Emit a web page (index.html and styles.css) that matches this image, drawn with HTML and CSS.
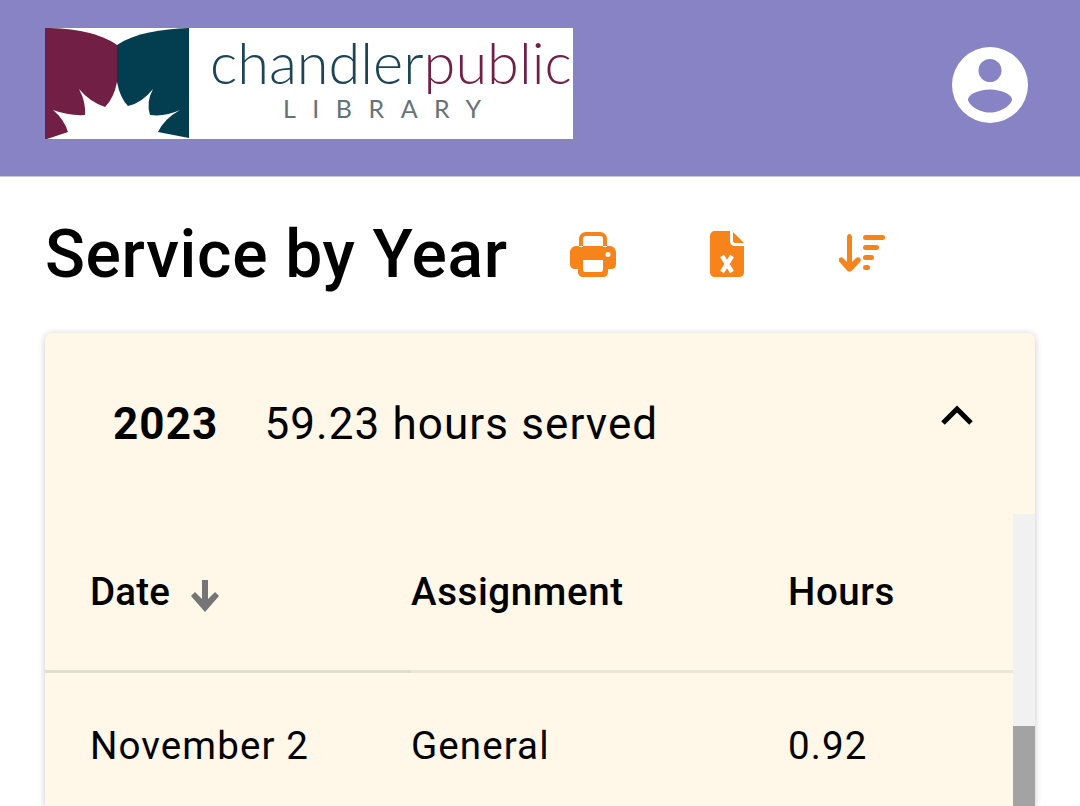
FILE: index.html
```html
<!DOCTYPE html>
<html lang="en">
<head>
    <meta charset="UTF-8">
    <meta name="viewport" content="width=device-width, initial-scale=1.0">
    <title>Service by Year</title>
    <link rel="stylesheet" href="styles.css">
</head>
<body>
    <header class="topbar">
        <div class="logo">
            <svg class="logo-mark" viewBox="0 0 145 111" width="145" height="111">
                <path fill="#711f45" d="M0 0C28 0 55 5 72 17V111H0Z"/>
                <path fill="#033e50" d="M72 17C90 5 116 1 144 0V111H72Z"/>
                <path fill="#fff" d="M2 111L23 104Q19 91 8 82Q24 88 40 87Q41 74 34 61Q45 74 60 79Q69 70 72 54Q75 70 83 78Q97 75 108 61Q101 74 105 87Q120 89 135 82Q119 91 113 104L144 110V111Z"/>
            </svg>
            <div class="logo-text">
                <div class="logo-name"><span class="logo-dark">chandler</span><span class="logo-red">public</span></div>
                <div class="logo-sub">LIBRARY</div>
            </div>
        </div>
        <svg class="account" viewBox="0 0 76 76" width="76" height="76">
            <path fill="#fff" fill-rule="evenodd" d="M38 0a38 38 0 1 0 0 76a38 38 0 1 0 0-76ZM38 12a11.500 11.500 0 1 1 0 23a11.500 11.500 0 1 1 0-23ZM38 42.500C50 42.500 60 48 60 52.500C60 57 50 65.500 38 65.500C26 65.500 16 57 16 52.500C16 48 26 42.500 38 42.500Z"/>
        </svg>
    </header>

    <main class="content">
        <div class="title-row">
            <h1>Service by Year</h1>
            <div class="actions">
                <svg viewBox="0 0 46 46" width="46" height="46" fill="#f7831b">
                    <path fill-rule="evenodd" d="M9 16V8C9 4 12 1 16 1H30C34 1 37 4 37 8V16H33V8C33 6 32 5 30 5H16C14 5 13 6 13 8V16ZM6 15H40C43 15 46 18 46 21V33C46 36 44 38 41 38H38V41C38 44 36 46 33 46H13C10 46 8 44 8 41V38H5C2 38 0 36 0 33V21C0 18 3 15 6 15ZM13 29V38C13 40 14 41 15 41H31C32 41 33 40 33 38V29ZM38 21a2.500 2.500 0 1 0 0 5a2.500 2.500 0 1 0 0-5Z"/>
                </svg>
                <svg viewBox="0 0 34 46" width="34" height="46" fill="#f7831b">
                    <path d="M5 0H20V10C20 13 22 15 25 15H34V41C34 44 32 46 29 46H5C2 46 0 44 0 41V5C0 2 2 0 5 0Z"/>
                    <path d="M23 1L34 12H25C24 12 23 11 23 10Z"/>
                    <path fill="none" stroke="#fff" stroke-width="4.500" d="M12 25L22 41M22 25L12 41"/>
                </svg>
                <svg class="sort-icon" viewBox="0 0 46 40" width="46" height="40" fill="#f7831b">
                    <path d="M8 3C8 1.500 9 0 10.500 0S13 1.500 13 3V28L17 24C18 23 20 23 21 24C22 25 22 27 21 28L12.500 37C11.500 38 9.500 38 8.500 37L0.500 28C-0.500 27 -0.500 25 0.500 24C1.500 23 3 23 4 24L8 28Z"/>
                    <rect x="24" y="1" width="22" height="5" rx="2.500"/>
                    <rect x="24" y="11" width="16" height="5" rx="2.500"/>
                    <rect x="24" y="21" width="11" height="5" rx="2.500"/>
                    <rect x="24" y="31" width="7" height="5" rx="2.500"/>
                </svg>
            </div>
        </div>

        <section class="card">
            <div class="card-head">
                <span class="year">2023</span>
                <span class="served">59.23 hours served</span>
                <svg class="chevron" viewBox="0 0 32 20" width="32" height="20">
                    <path fill="none" stroke="#000" stroke-width="5" d="M2 18L16 4L30 18"/>
                </svg>
            </div>
            <div class="table-wrap">
                <table>
                    <thead>
                        <tr>
                            <th class="col-date">Date
                                <svg class="sort-arrow" viewBox="0 0 28 32" width="28" height="32">
                                    <path fill="#757575" d="M11 0H17V19L24 12L28 16L14 32L0 16L4 12L11 19Z"/>
                                </svg>
                            </th>
                            <th class="col-assign">Assignment</th>
                            <th>Hours</th>
                        </tr>
                    </thead>
                    <tbody>
                        <tr>
                            <td>November 2</td>
                            <td>General</td>
                            <td>0.92</td>
                        </tr>
                    </tbody>
                </table>
                <div class="scrollbar"><div class="thumb"></div></div>
            </div>
        </section>
    </main>
</body>
</html>
```

FILE: styles.css
```css
html, body {
    height: 806px;
    overflow: hidden;
}

body {
    margin: 0;
    background: #fff;
    color: #000;
    font-family: Roboto, sans-serif;
}

.topbar {
    height: 177px;
    box-sizing: border-box;
    padding: 28px 52px 0 45px;
    background: #8783c5;
    border-bottom: 1px solid #c9c8d8;
    display: flex;
    justify-content: space-between;
}

.logo {
    display: flex;
    width: 528px;
    height: 111px;
    background: #fff;
}

.logo-text {
    flex: 1;
    padding-left: 20px;
    overflow: hidden;
    font-family: Lato, sans-serif;
    font-weight: 300;
}

.logo-name {
    margin-top: -1px;
    font-size: 57.700px;
    line-height: 70px;
    white-space: nowrap;
}

.logo-dark {
    color: #1e4556;
}

.logo-red {
    color: #711f45;
}

.logo-sub {
    margin-top: -4px;
    padding-left: 73px;
    font-size: 25px;
    line-height: 30px;
    font-weight: 400;
    letter-spacing: 16.500px;
    color: #66727a;
}

.account {
    margin-top: 19px;
}

.content {
    padding-left: 45px;
    width: 990px;
}

.title-row {
    height: 156px;
    display: flex;
    align-items: center;
}

h1 {
    margin: 0 0 2px;
    font-size: 66px;
    font-weight: 500;
    letter-spacing: 0.650px;
    white-space: nowrap;
}

.actions {
    margin-left: 62px;
    margin-bottom: 3px;
    display: flex;
    align-items: center;
    gap: 94px;
}

.sort-icon {
    margin-left: 1px;
}

.card {
    background: #fff7e8;
    border-radius: 7px 7px 0 0;
    box-shadow: 0 1px 7px rgba(0, 0, 0, 0.22);
}

.card-head {
    height: 181px;
    box-sizing: border-box;
    padding: 0 62px 0 68px;
    display: flex;
    align-items: center;
    font-size: 44px;
    letter-spacing: 1.100px;
}

.year {
    font-weight: 700;
    margin-right: 46px;
}

.chevron {
    margin-left: auto;
    margin-bottom: 17px;
}

.table-wrap {
    display: flex;
    height: 292px;
}

table {
    flex: 1;
    align-self: flex-start;
    border-collapse: collapse;
    table-layout: fixed;
    font-size: 38.500px;
}

th {
    height: 157px;
    padding: 0 0 1px;
    box-sizing: border-box;
    font-weight: 500;
    letter-spacing: 0.600px;
    text-align: left;
    border-bottom: 3px solid #ece5d8;
}

th:first-child {
    border-bottom-color: #e4ddcf;
}

td {
    height: 146px;
    padding: 0;
    letter-spacing: 1.100px;
}

th:first-child, td:first-child {
    padding-left: 45px;
}

.col-date {
    width: 366px;
    letter-spacing: 0.200px;
}

.col-assign {
    width: 377px;
}

.sort-arrow {
    margin-left: 11px;
    vertical-align: -7px;
}

.scrollbar {
    width: 22px;
    background: #f1f1f1;
    flex: none;
}

.thumb {
    margin-top: 212px;
    height: 80px;
    background: #a3a3a3;
}
```
